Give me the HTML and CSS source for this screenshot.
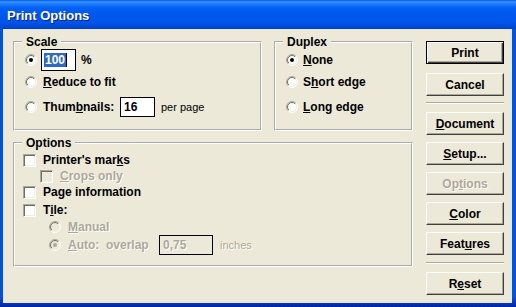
FILE: index.html
```html
<!DOCTYPE html>
<html>
<head>
<meta charset="utf-8">
<title>Print Options</title>
<link rel="stylesheet" href="styles.css">
</head>
<body>
<svg class="defs" width="0" height="0" aria-hidden="true">
  <defs>
    <linearGradient id="gOut" x1="0" y1="0" x2="1" y2="1">
      <stop offset="0.45" stop-color="#ACA899"/>
      <stop offset="0.55" stop-color="#FFFFFF"/>
    </linearGradient>
    <linearGradient id="gIn" x1="0" y1="0" x2="1" y2="1">
      <stop offset="0.45" stop-color="#716F64"/>
      <stop offset="0.55" stop-color="#F1EFE2"/>
    </linearGradient>
    <symbol id="radio" viewBox="0 0 12 12">
      <circle cx="6" cy="6" r="5.5" fill="none" stroke="url(#gOut)"/>
      <circle cx="6" cy="6" r="4.5" fill="none" stroke="url(#gIn)"/>
    </symbol>
  </defs>
</svg>
<div class="window">
  <div class="titlebar"><span class="title">Print Options</span></div>
  <div class="client">
    <div class="main">
      <div class="toprow">
        <fieldset class="group scale">
          <legend>Scale</legend>
          <div class="row s1">
            <svg class="radio on" viewBox="0 0 12 12"><circle cx="6" cy="6" r="4.5" class="face"/><use href="#radio"/><circle cx="6" cy="6" r="2" class="dot"/></svg>
            <span class="edit edit-pct"><span class="sel">100</span><span class="caret"></span></span>
            <span class="unit">%</span>
          </div>
          <div class="row s2">
            <svg class="radio" viewBox="0 0 12 12"><circle cx="6" cy="6" r="4.5" class="face"/><use href="#radio"/></svg>
            <span class="lbl"><u>R</u>educe to fit</span>
          </div>
          <div class="row s3">
            <svg class="radio" viewBox="0 0 12 12"><circle cx="6" cy="6" r="4.5" class="face"/><use href="#radio"/></svg>
            <span class="lbl thumbs">Thum<u>b</u>nails:</span>
            <span class="edit edit-thumb">16</span>
            <span class="small">per page</span>
          </div>
        </fieldset>
        <fieldset class="group duplex">
          <legend>Duplex</legend>
          <div class="row d1">
            <svg class="radio on" viewBox="0 0 12 12"><circle cx="6" cy="6" r="4.5" class="face"/><use href="#radio"/><circle cx="6" cy="6" r="2" class="dot"/></svg>
            <span class="lbl"><u>N</u>one</span>
          </div>
          <div class="row d2">
            <svg class="radio" viewBox="0 0 12 12"><circle cx="6" cy="6" r="4.5" class="face"/><use href="#radio"/></svg>
            <span class="lbl">S<u>h</u>ort edge</span>
          </div>
          <div class="row d3">
            <svg class="radio" viewBox="0 0 12 12"><circle cx="6" cy="6" r="4.5" class="face"/><use href="#radio"/></svg>
            <span class="lbl"><u>L</u>ong edge</span>
          </div>
        </fieldset>
      </div>
      <fieldset class="group options">
        <legend>Options</legend>
        <div class="row o1">
          <span class="check"></span>
          <span class="lbl">Printer's mar<u>k</u>s</span>
        </div>
        <div class="row o2 indent1">
          <span class="check disabled"></span>
          <span class="lbl dis"><u>C</u>rops only</span>
        </div>
        <div class="row o3">
          <span class="check"></span>
          <span class="lbl">Pa<u>g</u>e information</span>
        </div>
        <div class="row o4">
          <span class="check"></span>
          <span class="lbl">T<u>i</u>le:</span>
        </div>
        <div class="row o5 indent2">
          <svg class="radio dis" viewBox="0 0 12 12"><circle cx="6" cy="6" r="4.5" class="face"/><use href="#radio"/></svg>
          <span class="lbl dis"><u>M</u>anual</span>
        </div>
        <div class="row o6 indent2">
          <svg class="radio dis" viewBox="0 0 12 12"><circle cx="6" cy="6" r="4.5" class="face"/><use href="#radio"/><circle cx="6" cy="6" r="2" class="dot"/></svg>
          <span class="lbl dis auto"><u>A</u>uto:&nbsp;&nbsp;overlap</span>
          <span class="edit edit-overlap">0,75</span>
          <span class="small dis">inches</span>
        </div>
      </fieldset>
    </div>
    <div class="buttons">
      <button class="btn default b-print">Print</button>
      <button class="btn b-cancel">Cancel</button>
      <div class="sep sep1"></div>
      <button class="btn b-doc"><u>D</u>ocument</button>
      <button class="btn b-setup"><u>S</u>etup...</button>
      <button class="btn b-opt" disabled>Op<u>t</u>ions</button>
      <button class="btn b-color"><u>C</u>olor</button>
      <button class="btn b-feat">Feat<u>u</u>res</button>
      <div class="sep sep2"></div>
      <button class="btn b-reset">R<u>e</u>set</button>
    </div>
  </div>
</div>
</body>
</html>
```

FILE: styles.css
```css
* { box-sizing: border-box; }
html, body { margin: 0; padding: 0; }
body {
  width: 516px;
  height: 307px;
  overflow: hidden;
  background: #0A4FE0;
  font-family: "Liberation Sans", Arial, sans-serif;
  font-size: 12px;
  font-weight: bold;
  color: #000;
}
.defs { display: block; width: 0; height: 0; overflow: hidden; }

.window {
  width: 516px;
  height: 307px;
  display: flex;
  flex-direction: column;
  background: linear-gradient(to bottom, #0054E3 0, #0054E3 296px, #0843D0 300px, #0026A8 307px);
}
.titlebar {
  height: 29px;
  flex: none;
  display: flex;
  align-items: center;
  padding-left: 7px;
  background: linear-gradient(to bottom, #0058EE 0, #3D95FF 2px, #1C7BF8 4px, #0060F5 8px, #0058EE 14px, #0055EA 22px, #004BDC 26px, #0041C8 29px);
}
.title {
  color: #fff;
  font-size: 13px;
  font-weight: bold;
  text-shadow: 1px 1px #0A1F8A;
  margin-top: 1px;
}

.client {
  flex: 1;
  margin: 0 4px 4px 3px;
  background: #ECE9D8;
  display: flex;
  gap: 13px;
  padding: 6px 8px 0 10px;
}
.main { width: 400px; display: flex; flex-direction: column; }
.toprow { display: flex; gap: 12px; }

.group {
  margin: 0;
  padding: 0;
  min-width: 0;
  border: 2px groove #fff;
}
.group legend {
  margin-left: 7px;
  padding: 0 4px;
  line-height: 14px;
  font-size: 12px;
}
.scale { width: 249px; height: 96px; }
.duplex { width: 139px; height: 96px; }
.options { width: 400px; height: 131px; margin-top: 5px; }

.row { display: flex; align-items: center; }
.scale .row, .duplex .row { padding-left: 10px; }
.s1, .d1 { height: 21px; }
.s2, .d2 { height: 24px; }
.s3, .d3 { height: 25px; }

.radio { width: 12px; height: 12px; flex: none; }
.radio .face { fill: #fff; }
.radio .dot { fill: #000; }
.radio.dis .face { fill: #ECE9D8; }
.radio.dis .dot { fill: #ACA899; }
.radio + .lbl { margin-left: 6px; }
.duplex .radio + .lbl { margin-left: 5px; }

u { text-decoration: underline; text-underline-offset: 1px; }

.edit {
  border: 1px solid #000;
  background: #fff;
  display: flex;
  align-items: center;
  flex: none;
}
.edit-pct { width: 35px; height: 22px; margin-left: 4px; padding-left: 2px; }
.sel { background: #316AC5; color: #fff; line-height: 14px; padding: 0 1px; }
.caret { width: 1px; height: 14px; background: #000; }
.unit { margin-left: 5px; }
.thumbs { width: 77px; }
.edit-thumb { width: 35px; height: 20px; padding-left: 3px; }
.small { font-weight: normal; font-size: 11px; margin-left: 6px; }

.options .row { padding-left: 8px; height: 16px; }
.options .o1 { margin-top: 2px; }
.options .o4 { margin-top: 2px; }
.options .o5 { margin-top: 1px; }
.options .o6 { height: 19px; }
.options .indent1 { padding-left: 25px; }
.options .indent2 { padding-left: 34px; }
.options .indent2 .radio + .lbl { margin-left: 7px; }

.check {
  width: 13px;
  height: 13px;
  flex: none;
  background: #fff;
  border: 1px solid;
  border-color: #ACA899 #fff #fff #ACA899;
  box-shadow: inset 1px 1px #716F64, inset -1px -1px #F1EFE2;
}
.check.disabled { background: #ECE9D8; }
.check + .lbl { margin-left: 7px; }

.dis { color: #ACA899; text-shadow: 1px 1px #fff; }
.auto { width: 91px; }
.edit-overlap {
  width: 54px;
  height: 20px;
  background: #ECE9D8;
  color: #ACA899;
  text-shadow: 1px 1px #fff;
  padding-left: 3px;
}
.o6 .small { margin-left: 7px; }

.buttons {
  width: 78px;
  flex: none;
  display: flex;
  flex-direction: column;
  padding-top: 6px;
}
.btn {
  width: 78px;
  height: 23px;
  margin: 0;
  padding: 0;
  font-family: "Liberation Sans", Arial, sans-serif;
  font-size: 12px;
  font-weight: bold;
  color: #000;
  background: #ECE9D8;
  border: 1px solid;
  border-color: #fff #404040 #404040 #fff;
  box-shadow: inset -1px -1px #ACA899;
  border-radius: 0;
}
.btn.default {
  border-color: #000;
  box-shadow: inset 1px 1px #fff, inset -1px -1px #404040, inset -2px -2px #ACA899;
}
.btn:disabled { color: #ACA899; text-shadow: 1px 1px #fff; }
.b-cancel { margin-top: 9px; }
.sep { height: 2px; border-top: 1px solid #ACA899; border-bottom: 1px solid #fff; flex: none; }
.sep1 { margin-top: 6px; }
.b-doc { margin-top: 8px; }
.b-setup, .b-opt, .b-color, .b-feat { margin-top: 7px; }
.sep2 { margin-top: 7px; }
.b-reset { margin-top: 8px; }
```
